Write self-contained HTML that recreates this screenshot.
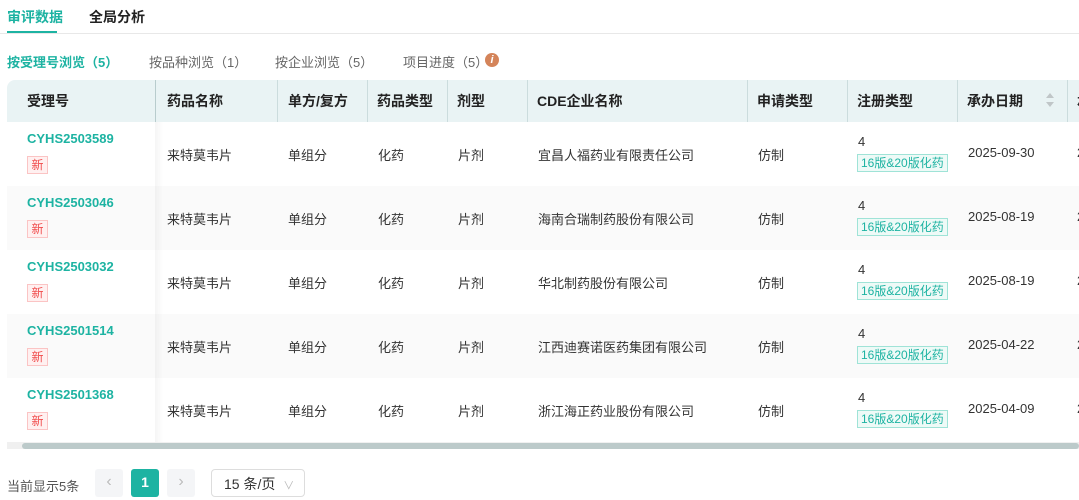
<!DOCTYPE html>
<html><head><meta charset="utf-8"><style>
*{box-sizing:border-box;margin:0;padding:0}
body{width:1079px;height:491px;overflow:hidden;background:#fff;font-family:"Liberation Sans","Noto Sans CJK SC",sans-serif;font-size:13px;color:#333;position:relative}
.a{position:absolute;white-space:nowrap}
.teal{color:#1db3a2}
.hdr{position:absolute;left:7px;top:80px;width:1072px;height:42px;background:#e9f3f4;border-radius:8px 0 0 0}
.hc{position:absolute;top:80px;height:42px;line-height:42px;font-weight:bold;font-size:14px;color:#222;padding-left:11px}
.sep{position:absolute;top:80px;width:1px;height:42px;background:#cbdcdd}
.row{position:absolute;left:7px;width:1072px;height:64px}
.tag{position:absolute;border:1px solid #9fe3d7;background:#eefaf7;color:#1db3a2;font-size:12px;height:18px;line-height:16px;padding:0 3px}
.new{position:absolute;border:1px solid #fbc4c4;background:#fff0f0;color:#f04b4b;font-size:12px;width:21px;height:18px;line-height:16px;text-align:center}
.pg{position:absolute;top:469px;width:28px;height:28px;border-radius:3px;background:#f4f5f7;color:#bbb;text-align:center;line-height:26px;font-size:16px}
</style></head><body>
<div class="a teal" style="left:7px;top:7px;font-size:14px;font-weight:bold">审评数据</div>
<div class="a" style="left:89px;top:7px;font-size:14px;font-weight:bold;color:#222">全局分析</div>
<div class="a" style="left:7px;top:31px;width:50px;height:3px;background:#1db3a2"></div>
<div class="a" style="left:0;top:33px;width:1079px;height:1px;background:#e8e8e8"></div>

<div class="a teal" style="left:7px;top:52px;font-weight:bold">按受理号浏览（5）</div>
<div class="a" style="left:149px;top:52px;color:#666">按品种浏览（1）</div>
<div class="a" style="left:275px;top:52px;color:#666">按企业浏览（5）</div>
<div class="a" style="left:403px;top:52px;color:#666">项目进度（5）</div>
<div class="a" style="left:485px;top:53px;width:14px;height:14px;border-radius:50%;background:#d4845a;color:#fff;font-size:11px;font-style:italic;font-weight:bold;text-align:center;line-height:14px">i</div>

<div class="hdr"></div>
<div class="hc" style="left:16px">受理号</div>
<div class="hc" style="left:156px">药品名称</div>
<div class="hc" style="left:277px">单方/复方</div>
<div class="hc" style="left:366px">药品类型</div>
<div class="hc" style="left:446px">剂型</div>
<div class="hc" style="left:526px">CDE企业名称</div>
<div class="hc" style="left:746px">申请类型</div>
<div class="hc" style="left:846px">注册类型</div>
<div class="hc" style="left:956px">承办日期</div>
<div class="hc" style="left:1066px">承办</div>
<div class="a" style="left:1046px;top:93px;width:0;height:0;border:4px solid transparent;border-bottom:5px solid #c0c6c8;border-top:0"></div>
<div class="a" style="left:1046px;top:102px;width:0;height:0;border:4px solid transparent;border-top:5px solid #c0c6c8;border-bottom:0"></div>
<div class="sep" style="left:155px;background:#b8cccd"></div>
<div class="sep" style="left:277px"></div><div class="sep" style="left:367px"></div><div class="sep" style="left:447px"></div><div class="sep" style="left:527px"></div><div class="sep" style="left:747px"></div><div class="sep" style="left:847px"></div><div class="sep" style="left:957px"></div><div class="sep" style="left:1067px"></div>

<div class="row" style="top:122px;background:#fff"></div>
<div class="row" style="top:186px;background:#fafafa"></div>
<div class="row" style="top:250px;background:#fff"></div>
<div class="row" style="top:314px;background:#fafafa"></div>
<div class="row" style="top:378px;background:#fff"></div>
<div class="a" style="left:155px;top:122px;width:8px;height:320px;background:linear-gradient(to right,rgba(0,0,0,0.04),rgba(0,0,0,0))"></div>

<div class="a teal" style="left:27px;top:131px;font-weight:bold">CYHS2503589</div><div class="new" style="left:27px;top:156px">新</div>
<div class="a teal" style="left:27px;top:195px;font-weight:bold">CYHS2503046</div><div class="new" style="left:27px;top:220px">新</div>
<div class="a teal" style="left:27px;top:259px;font-weight:bold">CYHS2503032</div><div class="new" style="left:27px;top:284px">新</div>
<div class="a teal" style="left:27px;top:323px;font-weight:bold">CYHS2501514</div><div class="new" style="left:27px;top:348px">新</div>
<div class="a teal" style="left:27px;top:387px;font-weight:bold">CYHS2501368</div><div class="new" style="left:27px;top:412px">新</div>

<div class="a" style="left:167px;top:145px">来特莫韦片</div><div class="a" style="left:288px;top:145px">单组分</div><div class="a" style="left:378px;top:145px">化药</div><div class="a" style="left:458px;top:145px">片剂</div><div class="a" style="left:538px;top:145px">宜昌人福药业有限责任公司</div><div class="a" style="left:758px;top:145px">仿制</div><div class="a" style="left:858px;top:134px">4</div><div class="tag" style="left:857px;top:154px">16版&amp;20版化药</div><div class="a" style="left:968px;top:145px">2025-09-30</div><div class="a" style="left:1077px;top:145px">2025-</div>
<div class="a" style="left:167px;top:209px">来特莫韦片</div><div class="a" style="left:288px;top:209px">单组分</div><div class="a" style="left:378px;top:209px">化药</div><div class="a" style="left:458px;top:209px">片剂</div><div class="a" style="left:538px;top:209px">海南合瑞制药股份有限公司</div><div class="a" style="left:758px;top:209px">仿制</div><div class="a" style="left:858px;top:198px">4</div><div class="tag" style="left:857px;top:218px">16版&amp;20版化药</div><div class="a" style="left:968px;top:209px">2025-08-19</div><div class="a" style="left:1077px;top:209px">2025-</div>
<div class="a" style="left:167px;top:273px">来特莫韦片</div><div class="a" style="left:288px;top:273px">单组分</div><div class="a" style="left:378px;top:273px">化药</div><div class="a" style="left:458px;top:273px">片剂</div><div class="a" style="left:538px;top:273px">华北制药股份有限公司</div><div class="a" style="left:758px;top:273px">仿制</div><div class="a" style="left:858px;top:262px">4</div><div class="tag" style="left:857px;top:282px">16版&amp;20版化药</div><div class="a" style="left:968px;top:273px">2025-08-19</div><div class="a" style="left:1077px;top:273px">2025-</div>
<div class="a" style="left:167px;top:337px">来特莫韦片</div><div class="a" style="left:288px;top:337px">单组分</div><div class="a" style="left:378px;top:337px">化药</div><div class="a" style="left:458px;top:337px">片剂</div><div class="a" style="left:538px;top:337px">江西迪赛诺医药集团有限公司</div><div class="a" style="left:758px;top:337px">仿制</div><div class="a" style="left:858px;top:326px">4</div><div class="tag" style="left:857px;top:346px">16版&amp;20版化药</div><div class="a" style="left:968px;top:337px">2025-04-22</div><div class="a" style="left:1077px;top:337px">2025-</div>
<div class="a" style="left:167px;top:401px">来特莫韦片</div><div class="a" style="left:288px;top:401px">单组分</div><div class="a" style="left:378px;top:401px">化药</div><div class="a" style="left:458px;top:401px">片剂</div><div class="a" style="left:538px;top:401px">浙江海正药业股份有限公司</div><div class="a" style="left:758px;top:401px">仿制</div><div class="a" style="left:858px;top:390px">4</div><div class="tag" style="left:857px;top:410px">16版&amp;20版化药</div><div class="a" style="left:968px;top:401px">2025-04-09</div><div class="a" style="left:1077px;top:401px">2025-</div>

<div class="a" style="left:7px;top:442px;width:1072px;height:7px;background:#f0f0f0"></div>
<div class="a" style="left:22px;top:443px;width:1057px;height:6px;background:#bccaca;border-radius:3px"></div>

<div class="a" style="left:7px;top:476px;color:#555">当前显示5条</div>
<div class="pg" style="left:95px">‹</div>
<div class="pg" style="left:131px;background:#1db3a2;color:#fff;font-weight:bold;font-size:14px">1</div>
<div class="pg" style="left:167px">›</div>
<div class="a" style="left:211px;top:469px;width:94px;height:28px;border:1px solid #ddd;border-radius:4px;padding-left:12px;line-height:28px;font-size:14px;color:#333">15 条/页 <span style="color:#bbb;font-size:11px;margin-left:4px">∨</span></div>
</body></html>
